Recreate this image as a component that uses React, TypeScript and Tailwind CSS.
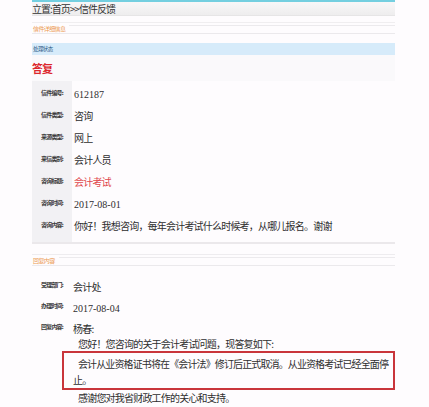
import { FC, ReactNode } from 'react';

const cjk = "font-['Noto_Sans_CJK_SC','Noto_Sans',sans-serif]";
const serif = "font-['Liberation_Serif','Noto_Sans_CJK_SC',serif]";

type RowProps = { label: string; children: ReactNode; gray?: boolean };

const Label: FC<{ text: string }> = ({ text }) => (
  <span className={`${cjk} text-[6px] font-semibold tracking-[-0.8px] text-[#3a3a3a]`}>
    {text}
  </span>
);

const InfoRow: FC<RowProps> = ({ label, children, gray }) => (
  <div className="flex h-[22px] items-center">
    <div
      className={`flex h-full w-[40px] items-center pl-[9px] ${gray ? 'bg-[#f2f1f4]' : ''}`}
    >
      <Label text={label} />
    </div>
    <div className="whitespace-nowrap pl-[2px]">{children}</div>
  </div>
);

const ReplyRow: FC<RowProps> = ({ label, children }) => (
  <div className="flex h-[21px] items-center">
    <div className="flex w-[40px] items-center pl-[9px]">
      <Label text={label} />
    </div>
    <div className="whitespace-nowrap pl-[1px]">{children}</div>
  </div>
);

const SectionTitle: FC<{ text: string }> = ({ text }) => (
  <div className="flex h-[11px] items-center border-b border-[#ebe9ec]">
    <span
      className={`${cjk} pl-[1px] pr-[4px] text-[6px] tracking-[-0.6px] text-[#ec9a52]`}
    >
      {text}
    </span>
    <div className="h-px flex-1 -translate-y-[3px] bg-[#eceaed]" />
  </div>
);

const val = `${cjk} text-[10px] tracking-[-0.8px] text-[#2e2e2e]`;
const num = `${serif} text-[10px] text-[#2e2e2e]`;

const App: FC = () => {
  return (
    <div className="h-[407px] w-[429px] overflow-hidden bg-[#fefcfe]">
      <div className="ml-[32px] w-[363px]">
        <div className="h-[2px] bg-[#74cfe0]" />
        <div className="flex h-[14px] items-center border-b border-[#e6e5e6] bg-gradient-to-b from-[#f8f7f8] to-[#eeedee]">
          <span className={`${cjk} text-[10px] tracking-[-1px] text-[#333]`}>
            立置:首页&gt;&gt;信件反馈
          </span>
        </div>

        <div className="mt-[6px] border-t border-[#f0eef0]">
          <SectionTitle text="信件详细信息" />
        </div>

        <div className="mt-[9px] flex h-[12px] items-center bg-[#d6ebfa]">
          <span className={`${cjk} pl-[1px] text-[5.5px] tracking-[-0.6px] text-[#2d5b88]`}>
            处理状态
          </span>
        </div>

        <div className="flex h-[26px] items-center bg-[#faf9fb]">
          <span className={`${cjk} text-[11px] font-bold tracking-[-1px] text-[#dc272d]`}>
            答复
          </span>
        </div>

        <div>
          <InfoRow label="信件编号:" gray>
            <span className={num}>612187</span>
          </InfoRow>
          <InfoRow label="信件类型:" gray>
            <span className={val}>咨询</span>
          </InfoRow>
          <InfoRow label="来源类型:" gray>
            <span className={val}>网上</span>
          </InfoRow>
          <InfoRow label="来信类别:" gray>
            <span className={val}>会计人员</span>
          </InfoRow>
          <InfoRow label="咨询标题:" gray>
            <span className={`${cjk} text-[10px] tracking-[-0.8px] text-[#e0474c]`}>
              会计考试
            </span>
          </InfoRow>
          <InfoRow label="咨询时间:" gray>
            <span className={num}>2017-08-01</span>
          </InfoRow>
          <InfoRow label="咨询内容:" gray>
            <span className={val}>你好！我想咨询，每年会计考试什么时候考，从哪儿报名。谢谢</span>
          </InfoRow>
          <div className="h-[7px] w-[40px] bg-[#f2f1f4]" />
        </div>

        <div className="h-[2px] bg-[#ebe8eb]" />

        <div className="mt-[10px] border-t border-[#eeecef]">
          <SectionTitle text="回复内容" />
        </div>

        <div className="mt-[8px]">
          <ReplyRow label="受理部门:">
            <span className={val}>会计处</span>
          </ReplyRow>
          <ReplyRow label="办理时间:">
            <span className={num}>2017-08-04</span>
          </ReplyRow>
          <ReplyRow label="回复内容:">
            <span className={val}>杨春:</span>
          </ReplyRow>
        </div>

        <div className={`${val} whitespace-nowrap pl-[41px]`}>
          <div className="h-[14px] pl-[5px] leading-[14px]">
            您好！您咨询的关于会计考试问题，现答复如下:
          </div>
          <div className="-ml-[11px] overflow-hidden border-2 border-[#c9353b] pl-[14px] pt-[3px] leading-[16px]">
            <div className="tracking-[-0.88px]">
              会计从业资格证书将在《会计法》修订后正式取消。从业资格考试已经全面停
            </div>
            <div className="-ml-[5px]">止。</div>
          </div>
          <div className="pl-[5px] leading-[16px]">感谢您对我省财政工作的关心和支持。</div>
        </div>
      </div>
    </div>
  );
};

export default App;
